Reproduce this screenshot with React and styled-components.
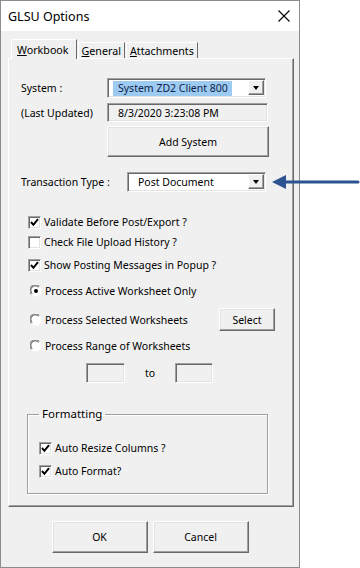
import React from "react";
import styled, { createGlobalStyle } from "styled-components";

const GlobalStyle = createGlobalStyle`
  html, body {
    margin: 0;
    padding: 0;
    background: #ffffff;
  }
  body {
    font-family: "Noto Sans", "Liberation Sans", sans-serif;
    font-size: 10.5px;
    color: #000000;
  }
`;

const Page = styled.div`
  position: relative;
  display: flex;
  width: 360px;
  height: 568px;
  overflow: hidden;
`;

const Dialog = styled.div`
  width: 300px;
  height: 568px;
  box-sizing: border-box;
  border: 1px solid #8c8c8c;
  background: #f0f0f0;
  display: flex;
  flex-direction: column;
`;

const TitleBar = styled.div`
  height: 30px;
  flex: none;
  background: #ffffff;
  display: flex;
  align-items: center;
  justify-content: space-between;
  padding: 0 9px 0 7px;
  font-size: 12.5px;
`;

const CloseIcon = () => (
  <svg width="12" height="12" viewBox="0 0 12 12">
    <path d="M0.5 0.5 L11.5 11.5 M11.5 0.5 L0.5 11.5" stroke="#000" strokeWidth="1.1" fill="none" />
  </svg>
);

const Body = styled.div`
  flex: 1;
  display: flex;
  flex-direction: column;
  padding: 7px 5px 0 7px;
`;

const TabStrip = styled.div`
  display: flex;
  align-items: flex-end;
  height: 20px;
  padding-left: 3px;
  font-size: 10.7px;
`;

const Tab = styled.div`
  box-sizing: border-box;
  height: ${(p) => (p.$active ? 20 : 16)}px;
  padding: ${(p) => (p.$active ? "1px 7px 0 5px" : "0 3px 0 3px")};
  display: flex;
  align-items: center;
  border-top: 1px solid #ffffff;
  border-left: 1px solid #ffffff;
  border-right: 1px solid #696969;
  margin-left: ${(p) => (p.$active ? 0 : 1)}px;
  position: relative;
  top: ${(p) => (p.$active ? 1 : 0)}px;
  background: #f0f0f0;
`;

const Panel = styled.div`
  box-sizing: border-box;
  height: 449px;
  border-top: 1px solid #ffffff;
  border-left: 1px solid #ffffff;
  border-right: 1px solid #696969;
  border-bottom: 1px solid #696969;
  box-shadow: inset -1px -1px 0 #a0a0a0;
  padding: 0 0 0 12px;
  display: flex;
  flex-direction: column;
`;

const FieldRow = styled.div`
  display: flex;
  align-items: center;
  margin-top: ${(p) => p.$top}px;
`;

const Label = styled.div`
  width: ${(p) => p.$width || 86}px;
  flex: none;
  white-space: nowrap;
`;

const Sunken = styled.div`
  box-sizing: border-box;
  width: ${(p) => p.$width}px;
  height: ${(p) => p.$height || 20}px;
  border: 1px solid;
  border-color: #a0a0a0 #ffffff #ffffff #a0a0a0;
  box-shadow: inset 1px 1px 0 #696969, inset -1px -1px 0 #e3e3e3;
  background: ${(p) => (p.$white ? "#ffffff" : "#f0f0f0")};
  display: flex;
  align-items: center;
  white-space: nowrap;
`;

const ComboValue = styled.span`
  margin-left: 5px;
  padding: 0 4px 0 5px;
  line-height: 15px;
  background: ${(p) => (p.$highlight ? "#9dcaf0" : "transparent")};
  color: ${(p) => (p.$highlight ? "#0c1f4a" : "#000000")};
`;

const DropButton = styled.div`
  box-sizing: border-box;
  margin-left: auto;
  align-self: flex-start;
  margin-top: 1px;
  margin-right: 1px;
  width: 16px;
  height: 15px;
  background: #f0f0f0;
  border: 1px solid;
  border-color: #ffffff #696969 #696969 #ffffff;
  box-shadow: inset -1px -1px 0 #a0a0a0;
  display: flex;
  align-items: center;
  justify-content: center;
`;

const Caret = styled.span`
  width: 0;
  height: 0;
  border-left: 3.5px solid transparent;
  border-right: 3.5px solid transparent;
  border-top: 4px solid #000000;
`;

const TextValue = styled.span`
  padding-left: 10px;
`;

const Button = styled.div`
  box-sizing: border-box;
  width: ${(p) => p.$width}px;
  height: ${(p) => p.$height}px;
  background: #f0f0f0;
  border: 1px solid;
  border-color: #ffffff #696969 #696969 #ffffff;
  box-shadow: inset -1px -1px 0 #a0a0a0, inset 1px 1px 0 #e3e3e3;
  display: flex;
  align-items: center;
  justify-content: center;
  flex: none;
`;

const OptionRow = styled.div`
  display: flex;
  align-items: center;
  height: ${(p) => p.$height || 16}px;
  margin-top: ${(p) => p.$top}px;
  padding-left: ${(p) => p.$indent}px;
  white-space: nowrap;
`;

const Box = styled.span`
  box-sizing: border-box;
  width: 13px;
  height: 13px;
  flex: none;
  margin-right: 3px;
  background: #ffffff;
  border: 1px solid;
  border-color: #a0a0a0 #ffffff #ffffff #a0a0a0;
  box-shadow: inset 1px 1px 0 #696969, inset -1px -1px 0 #e3e3e3;
  display: flex;
  align-items: center;
  justify-content: center;
`;

const CheckBox = ({ checked }) => (
  <Box>
    {checked && (
      <svg width="9" height="9" viewBox="0 0 9 9">
        <path d="M1 4 L3.4 6.8 L8 1.2" stroke="#000" strokeWidth="2" fill="none" />
      </svg>
    )}
  </Box>
);

const RadioCircle = styled.span`
  width: 12px;
  height: 12px;
  flex: none;
  margin-right: 3px;
  display: flex;
`;

const Radio = ({ checked }) => (
  <RadioCircle>
    <svg width="12" height="12" viewBox="0 0 12 12">
      <circle cx="6" cy="6" r="5.5" fill="#ffffff" />
      <path d="M1.2 9.4 A5.3 5.3 0 0 1 9.4 1.2" stroke="#808080" strokeWidth="1" fill="none" />
      <path d="M2.1 8.6 A4.2 4.2 0 0 1 8.6 2.1" stroke="#404040" strokeWidth="1" fill="none" />
      {checked && <circle cx="6" cy="6" r="2" fill="#000" />}
    </svg>
  </RadioCircle>
);

const Spacer = styled.div`
  flex: 1;
`;

const RangeRow = styled.div`
  display: flex;
  align-items: center;
  margin-top: 9px;
  padding-left: 65px;
`;

const ToText = styled.span`
  width: 50px;
  flex: none;
  text-align: center;
`;

const Group = styled.fieldset`
  box-sizing: border-box;
  width: 241px;
  height: 88px;
  margin: 23px 0 0 6px;
  padding: 0 0 0 11px;
  border: 1px solid #a0a0a0;
  box-shadow: inset 1px 1px 0 #ffffff, 1px 1px 0 #ffffff;
  display: flex;
  flex-direction: column;
`;

const Legend = styled.legend`
  padding: 0 3px;
  margin-left: 0;
  line-height: 16px;
  font-size: 11.5px;
`;

const Footer = styled.div`
  display: flex;
  justify-content: center;
  gap: 5px;
  margin-top: 14px;
  padding-right: 2px;
`;

const ArrowOverlay = styled.svg`
  position: absolute;
  left: 270px;
  top: 174px;
`;

const App = () => {
  return (
    <>
      <GlobalStyle />
      <Page>
        <Dialog>
          <TitleBar>
            <span>GLSU Options</span>
            <CloseIcon />
          </TitleBar>
          <Body>
            <TabStrip>
              <Tab $active>
                <span>
                  <u>W</u>orkbook
                </span>
              </Tab>
              <Tab>
                <span>
                  <u>G</u>eneral
                </span>
              </Tab>
              <Tab>
                <span>
                  <u>A</u>ttachments
                </span>
              </Tab>
            </TabStrip>
            <Panel>
              <FieldRow $top={19}>
                <Label>System :</Label>
                <Sunken $width={159} $white>
                  <ComboValue $highlight>System ZD2 Client 800</ComboValue>
                  <DropButton>
                    <Caret />
                  </DropButton>
                </Sunken>
              </FieldRow>
              <FieldRow $top={5}>
                <Label>(Last Updated)</Label>
                <Sunken $width={161} $height={19}>
                  <TextValue>8/3/2020 3:23:08 PM</TextValue>
                </Sunken>
              </FieldRow>
              <FieldRow $top={4}>
                <Label />
                <Button $width={162} $height={31}>
                  Add System
                </Button>
              </FieldRow>
              <FieldRow $top={15}>
                <Label $width={106}>Transaction Type :</Label>
                <Sunken $width={139} $white>
                  <ComboValue>Post Document</ComboValue>
                  <DropButton>
                    <Caret />
                  </DropButton>
                </Sunken>
              </FieldRow>

              <OptionRow $top={22} $indent={7}>
                <CheckBox checked />
                Validate Before Post/Export ?
              </OptionRow>
              <OptionRow $top={4} $indent={7}>
                <CheckBox />
                Check File Upload History ?
              </OptionRow>
              <OptionRow $top={7} $indent={7}>
                <CheckBox checked />
                Show Posting Messages in Popup ?
              </OptionRow>
              <OptionRow $top={10} $indent={9}>
                <Radio checked />
                Process Active Worksheet Only
              </OptionRow>
              <OptionRow $top={9} $indent={9} $height={23}>
                <Radio />
                Process Selected Worksheets
                <Spacer />
                <Button $width={56} $height={23}>
                  Select
                </Button>
                <span style={{ width: 18 }} />
              </OptionRow>
              <OptionRow $top={7} $indent={9}>
                <Radio />
                Process Range of Worksheets
              </OptionRow>
              <RangeRow>
                <Sunken $width={39} />
                <ToText>to</ToText>
                <Sunken $width={38} />
              </RangeRow>

              <Group>
                <Legend>Formatting</Legend>
                <OptionRow $top={18} $indent={0}>
                  <CheckBox checked />
                  Auto Resize Columns ?
                </OptionRow>
                <OptionRow $top={7} $indent={0}>
                  <CheckBox checked />
                  Auto Format?
                </OptionRow>
              </Group>
            </Panel>
            <Footer>
              <Button $width={96} $height={32}>
                OK
              </Button>
              <Button $width={96} $height={32}>
                Cancel
              </Button>
            </Footer>
          </Body>
        </Dialog>
        <ArrowOverlay width="90" height="16" viewBox="0 0 90 16">
          <path d="M14 8 L88 8" stroke="#2c5292" strokeWidth="3" strokeLinecap="round" />
          <path d="M2 8 L16 1 L16 15 Z" fill="#2c5292" />
        </ArrowOverlay>
      </Page>
    </>
  );
};

export default App;
